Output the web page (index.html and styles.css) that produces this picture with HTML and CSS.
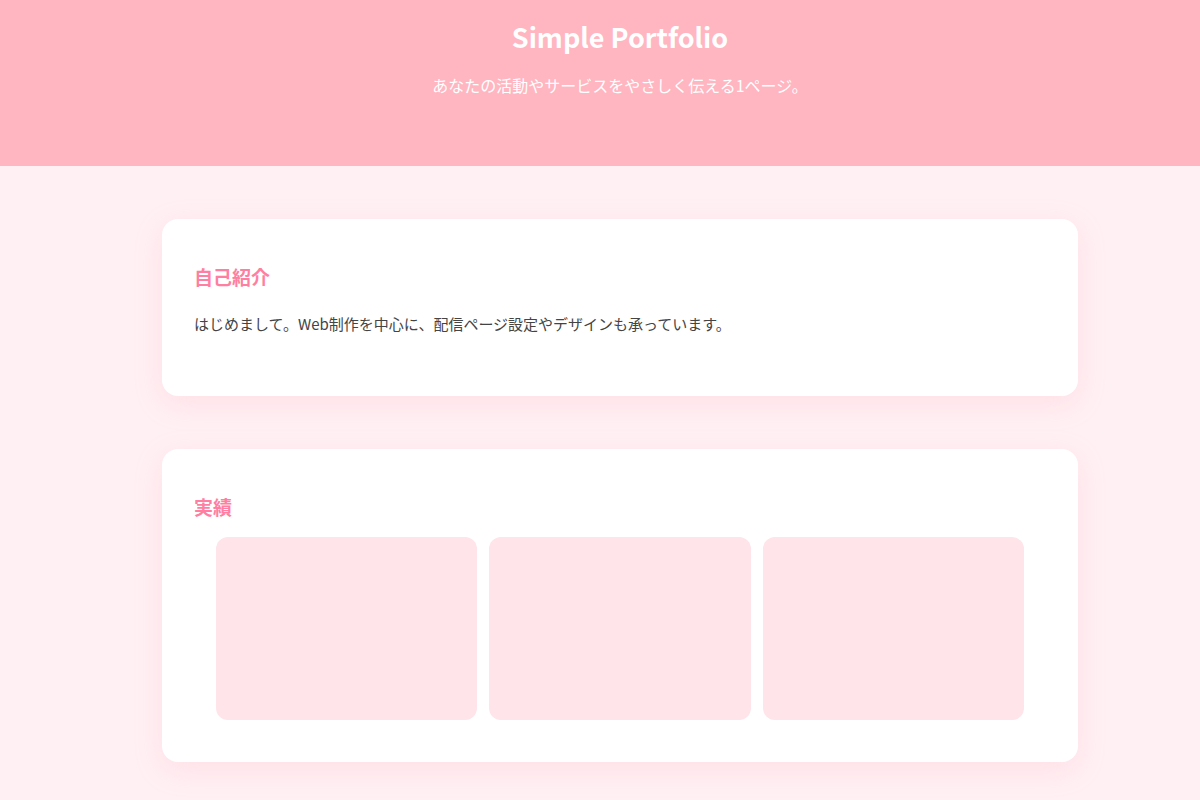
FILE: index.html
```html
<!DOCTYPE html>
<html lang="ja">
<head>
<meta charset="utf-8">
<title>Simple Portfolio</title>
<link rel="stylesheet" href="styles.css">
</head>
<body>
<header class="hero">
  <h1 class="hero-title">Simple Portfolio</h1>
  <p class="hero-sub">あなたの活動やサービスをやさしく伝える1ページ。</p>
</header>
<main class="main">
  <section class="card card-about">
    <h2 class="card-title">自己紹介</h2>
    <p class="card-text">はじめまして。Web制作を中心に、配信ページ設定やデザインも承っています。</p>
  </section>
  <section class="card card-works">
    <h2 class="card-title">実績</h2>
    <div class="works">
      <div class="work"></div>
      <div class="work"></div>
      <div class="work"></div>
    </div>
  </section>
</main>
</body>
</html>
```
FILE: styles.css
```css
* { box-sizing: border-box; }
html, body { margin: 0; padding: 0; }
body {
  font-family: "Noto Sans CJK JP", "Noto Sans", sans-serif;
  background: #fff0f3;
  color: #444;
  min-height: 800px;
}
.hero {
  background: #ffb6c1;
  height: 166px;
  padding: 15px 0 0 40px;
  text-align: center;
  color: #fff;
}
.hero-title {
  margin: 0;
  font-size: 27px;
  line-height: 44px;
  font-weight: 700;
}
.hero-sub {
  margin: 10px 0 0;
  font-size: 16px;
  line-height: 32px;
}
.main {
  padding: 53px 0 40px 40px;
  display: flex;
  flex-direction: column;
  align-items: center;
  gap: 53px;
}
.card {
  width: 916px;
  background: #fff;
  border-radius: 16px;
  box-shadow: 0 8px 28px rgba(255, 170, 190, 0.22);
  padding: 44px 32px 42px;
}
.card-about { padding-bottom: 43px; }
.card-title {
  margin: 0;
  font-size: 19px;
  line-height: 27px;
  font-weight: 700;
  color: #ff7fa2;
}
.card-text {
  margin: 20px 0 15px;
  font-size: 15px;
  line-height: 28px;
  color: #444;
}
.works {
  margin: 17px auto 0;
  width: 809px;
  display: grid;
  grid-template-columns: repeat(3, 1fr);
  gap: 12px;
}
.work {
  height: 183px;
  background: #ffe4ea;
  border-radius: 12px;
}
```
